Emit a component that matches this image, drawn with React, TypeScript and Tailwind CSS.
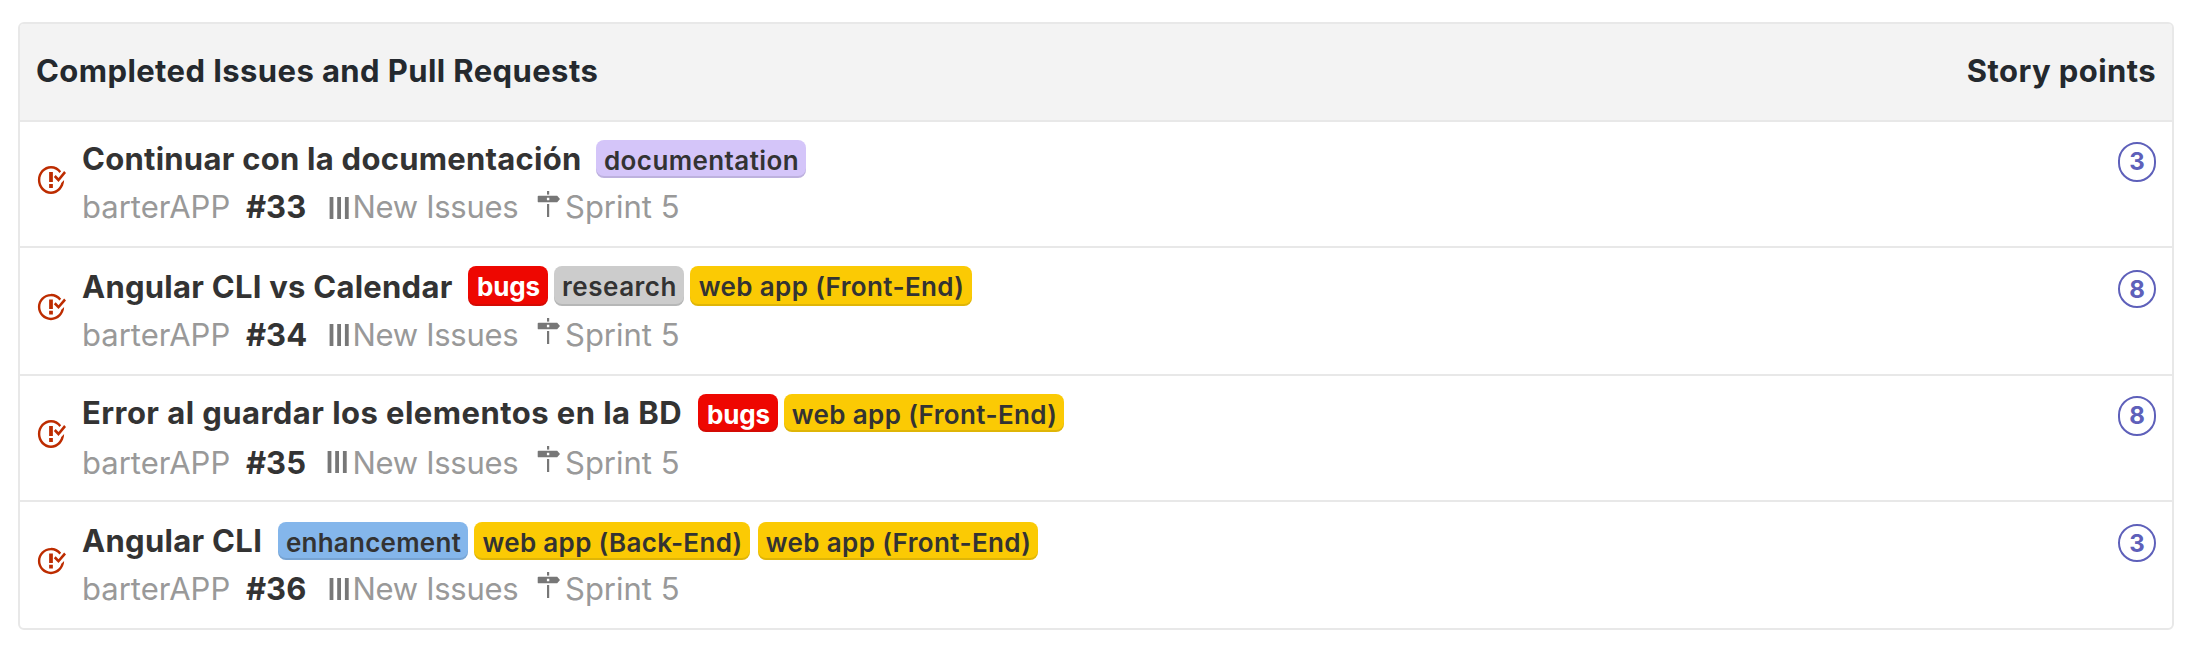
type Label = { text: string; className: string };

type Issue = {
  number: string;
  title: string;
  points: number;
  labels: Label[];
  row: string;
  icon: string;
  titleClass: string;
  labelGroup: string;
  meta: string;
  bars: string;
  sign: string;
  badge: string;
};

const YELLOW = "bg-[#fbca04] text-[#333]";

const issues: Issue[] = [
  {
    number: "#33",
    title: "Continuar con la documentación",
    points: 3,
    labels: [
      { text: "documentation", className: "h-[38px] w-[210px] bg-[#d4c5f9] text-[#333] font-semibold tracking-[0.4px]" },
    ],
    row: "h-[126px] border-b-2 pt-[17px]",
    icon: "mt-[25px] h-8",
    titleClass: "w-[514px] tracking-[0.26px]",
    labelGroup: "mt-px gap-1.5",
    meta: "mt-2",
    bars: "mt-[10px]",
    sign: "mt-1",
    badge: "mt-[3px] h-10",
  },
  {
    number: "#34",
    title: "Angular CLI vs Calendar",
    points: 8,
    labels: [
      { text: "bugs", className: "h-10 w-20 bg-[#ee0701] text-white font-bold tracking-[-0.1px]" },
      { text: "research", className: "h-10 w-[130px] bg-[#cccccc] text-[#333] font-semibold tracking-[0.5px]" },
      { text: "web app (Front-End)", className: `h-10 w-[282px] font-semibold tracking-[0.38px] ${YELLOW}` },
    ],
    row: "h-[128px] border-b-2 pt-[19px]",
    icon: "mt-[25px] h-[30px]",
    titleClass: "w-[386px] tracking-[0.25px]",
    labelGroup: "-mt-px gap-1.5",
    meta: "mt-2",
    bars: "mt-[9px]",
    sign: "mt-[3px]",
    badge: "mt-[3px] h-[38px]",
  },
  {
    number: "#35",
    title: "Error al guardar los elementos en la BD",
    points: 8,
    labels: [
      { text: "bugs", className: "h-[38px] w-20 bg-[#ee0701] text-white font-bold tracking-[-0.1px]" },
      { text: "web app (Front-End)", className: `h-[38px] w-[280px] font-semibold tracking-[0.38px] ${YELLOW}` },
    ],
    row: "h-[126px] border-b-2 pt-[17px]",
    icon: "mt-[25px] h-8",
    titleClass: "w-[616px] tracking-[0.45px]",
    labelGroup: "mt-px gap-1.5",
    meta: "mt-[10px]",
    bars: "mt-2 -ml-[2px] mr-[2px]",
    sign: "mt-[3px]",
    badge: "mt-[3px] h-10",
  },
  {
    number: "#36",
    title: "Angular CLI",
    points: 3,
    labels: [
      { text: "enhancement", className: "h-[38px] w-[190px] bg-[#84b6eb] text-[#333] font-semibold tracking-[0.25px]" },
      { text: "web app (Back-End)", className: `h-[38px] w-[276px] font-semibold tracking-[0.33px] ${YELLOW}` },
      { text: "web app (Front-End)", className: `ml-0.5 h-[38px] w-[280px] font-semibold tracking-[0.38px] ${YELLOW}` },
    ],
    row: "h-[126px] pt-[19px]",
    icon: "mt-[25px] h-[30px]",
    titleClass: "w-[196px] tracking-[0.3px]",
    labelGroup: "mt-px gap-1.5",
    meta: "mt-2",
    bars: "mt-[9px]",
    sign: "mt-[3px]",
    badge: "mt-[3px] h-[38px]",
  },
];

function IssueClosedIcon({ className }: { className: string }) {
  return (
    <svg
      viewBox="0 0 16 16"
      preserveAspectRatio="none"
      className={`w-[30px] shrink-0 fill-[#bd2c00] ${className}`}
    >
      <path d="M7 10h2v2H7v-2zm2-6H7v5h2V4zm1.5 1.5l-1 1L12 9l4-4.5-1-1L12 7l-1.5-1.5zM8 13.7A5.71 5.71 0 0 1 2.3 8c0-3.14 2.56-5.7 5.7-5.7 1.83 0 3.45.88 4.5 2.2l.92-.92A6.947 6.947 0 0 0 8 1C4.14 1 1 4.14 1 8s3.14 7 7 7 7-3.14 7-7l-1.52 1.52c-.66 2.41-2.86 4.19-5.48 4.19v-.01z" />
    </svg>
  );
}

function PipelineIcon({ className }: { className: string }) {
  return (
    <svg viewBox="0 0 23 22" className={`h-[22px] w-[23px] shrink-0 fill-[#777] ${className}`}>
      <rect x="0.6" width="3.8" height="22" />
      <rect x="8.2" width="3.8" height="22" />
      <rect x="15.9" width="3.8" height="22" />
    </svg>
  );
}

function MilestoneIcon({ className }: { className: string }) {
  return (
    <svg viewBox="0 0 28 26" className={`h-[26px] w-[28px] shrink-0 fill-[#777] ${className}`}>
      <rect x="10" y="0" width="2.2" height="3.6" />
      <path
        fillRule="evenodd"
        d="M1.6 4.7H20.2L23 8L20.2 11.3H1.6Q.7 11.3 .7 10.4V5.6Q.7 4.7 1.6 4.7ZM9.9 6.8V9.2H12.3V6.8Z"
      />
      <rect x="10" y="13" width="2.2" height="13" />
    </svg>
  );
}

function IssueRow({ issue }: { issue: Issue }) {
  return (
    <li className={`flex items-start border-[#e8e8e8] pl-4 pr-4 ${issue.row}`}>
      <IssueClosedIcon className={issue.icon} />
      <div className="ml-4 flex-1 whitespace-nowrap text-[31px] leading-10">
        <div className="flex h-10 items-start">
          <h3 className={`shrink-0 font-bold text-[#333] ${issue.titleClass}`}>{issue.title}</h3>
          <div className={`flex items-start ${issue.labelGroup}`}>
            {issue.labels.map((label) => (
              <span
                key={label.text}
                className={`shrink-0 rounded-[8px] pl-px text-center text-[26px] leading-[41px] shadow-[inset_0_-2px_0_rgba(27,31,35,0.12)] ${label.className}`}
              >
                {label.text}
              </span>
            ))}
          </div>
        </div>
        <div className={`flex h-10 items-start text-[#999] ${issue.meta}`}>
          <span className="w-[164px] shrink-0">barterAPP</span>
          <span className="w-[83px] shrink-0 font-bold text-[#333]">{issue.number}</span>
          <PipelineIcon className={issue.bars} />
          <span className="w-[185px] shrink-0 pl-[0.5px] tracking-[-0.3px]">New Issues</span>
          <MilestoneIcon className={issue.sign} />
          <span>Sprint 5</span>
        </div>
      </div>
      <span
        className={`w-[38px] shrink-0 rounded-[19px] border-2 border-[#5e60ba] text-center text-[24px] font-bold leading-[35px] text-[#5e60ba] ${issue.badge}`}
      >
        {issue.points}
      </span>
    </li>
  );
}

export default function App() {
  return (
    <main className="h-[650px] bg-white pl-[18px] pr-[14px] pt-[22px] font-['Inter',sans-serif]">
      <section className="h-[608px] overflow-hidden rounded-[6px] border-2 border-[#e8e8e8]">
        <header className="flex h-[98px] justify-between border-b-2 border-[#e8e8e8] bg-[#f3f3f3] px-4 pt-[26.5px] text-[31px] font-bold leading-10 tracking-[0.41px] text-[#24292e]">
          <h2>Completed Issues and Pull Requests</h2>
          <span>Story points</span>
        </header>
        <ul>
          {issues.map((issue) => (
            <IssueRow key={issue.number} issue={issue} />
          ))}
        </ul>
      </section>
    </main>
  );
}
